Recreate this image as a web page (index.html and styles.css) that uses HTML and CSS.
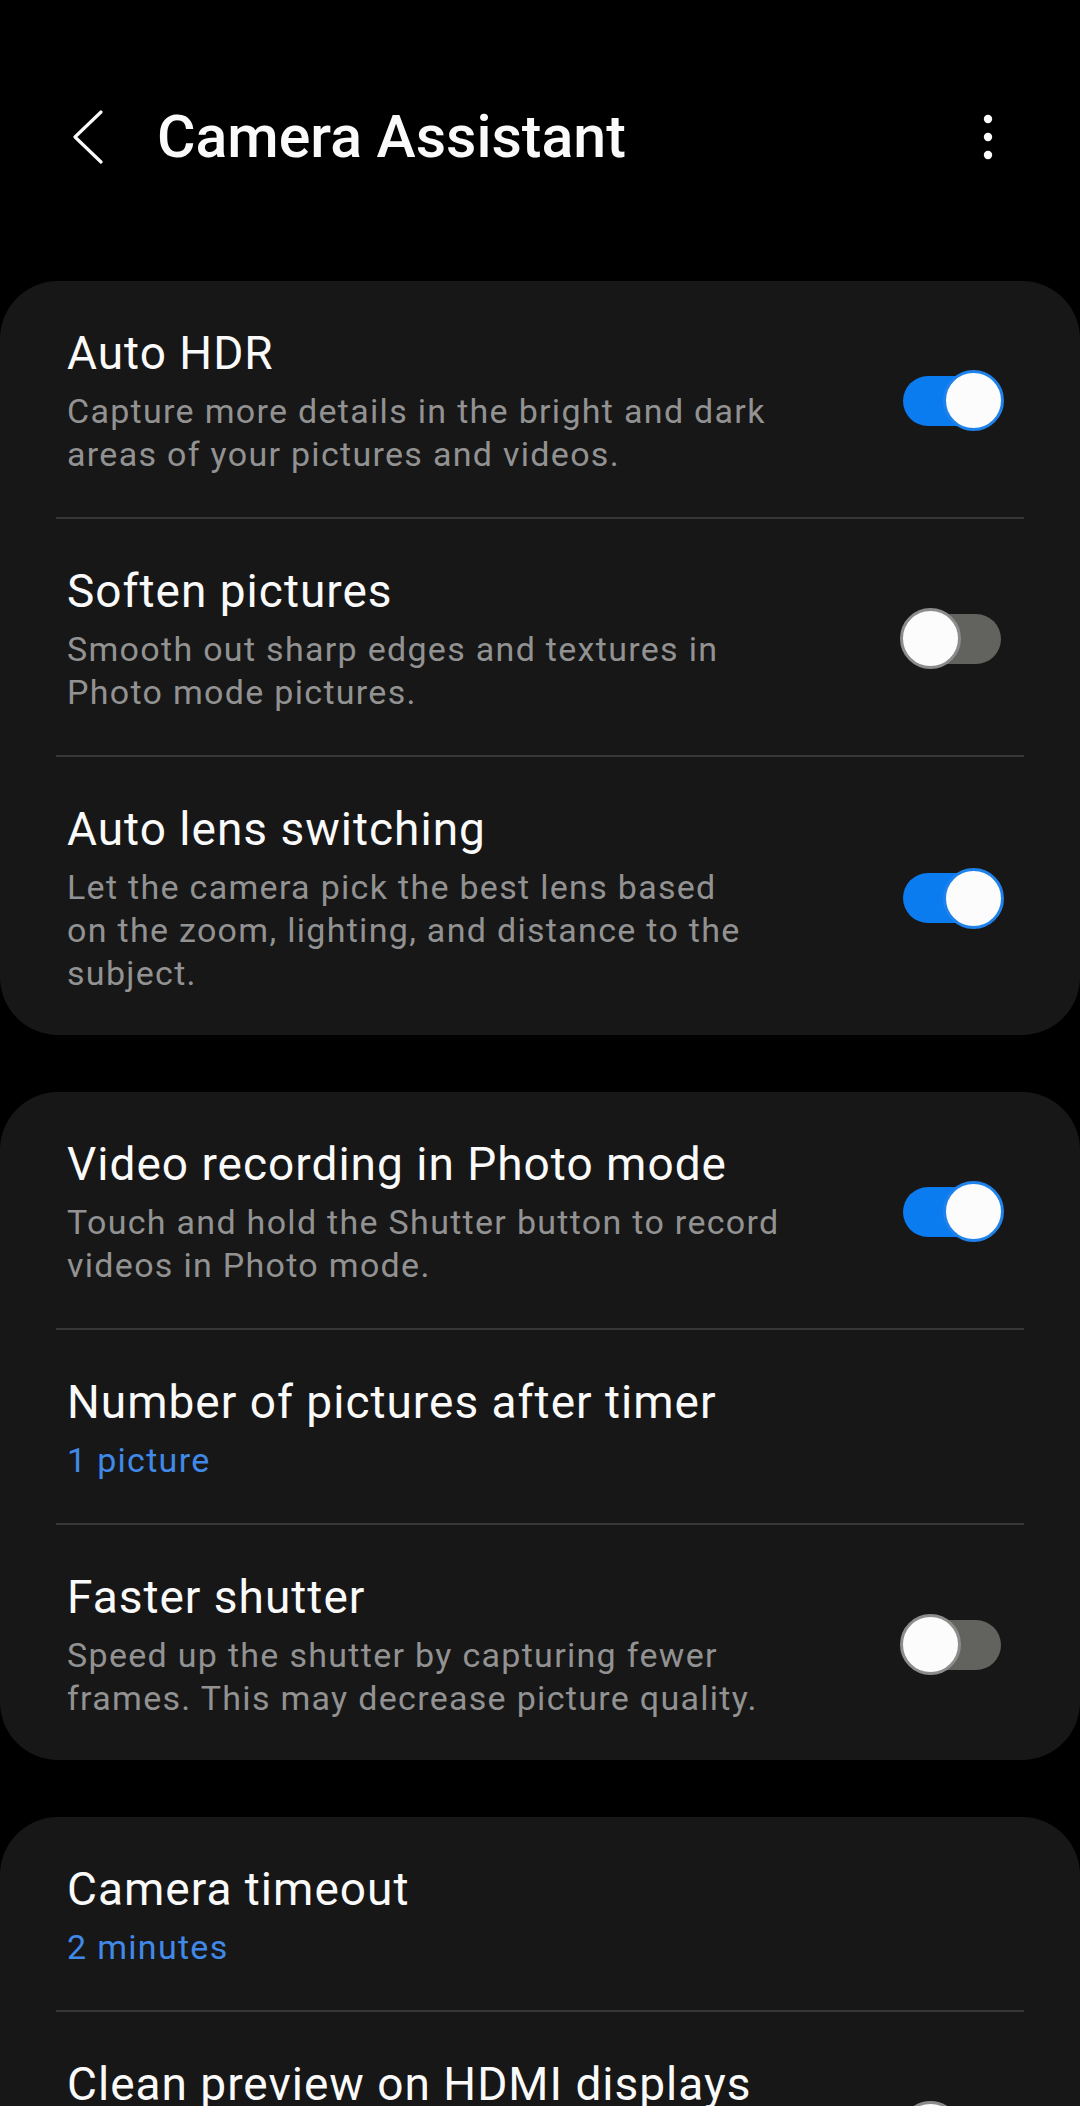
FILE: index.html
```html
<!DOCTYPE html>
<html>

<head>

<title>Camera Assistant</title>

<link rel="stylesheet" href="styles.css">

</head>

<body>

<div id='corpo'>

<div id='cabecalho'>
  <svg class='voltar' width="32" height="54" viewBox="0 0 32 54">
    <path d="M29 2 L3 27 L29 52" fill="none" stroke="#fafafa" stroke-width="3.2" stroke-linecap="round" stroke-linejoin="round"/>
  </svg>
  <h1 id='titulo'>Camera Assistant</h1>
  <svg class='menu' width="12" height="48" viewBox="0 0 12 48">
    <circle cx="6" cy="6" r="4.2" fill="#fafafa"/>
    <circle cx="6" cy="24" r="4.2" fill="#fafafa"/>
    <circle cx="6" cy="42" r="4.2" fill="#fafafa"/>
  </svg>
</div>

<!-- bloco 1 -->
<div class='cartao'>
  <div class='linha'>
    <div class='texto'>
      <div class='nome'>Auto HDR</div>
      <div class='desc'>Capture more details in the bright and dark<br>areas of your pictures and videos.</div>
    </div>
    <div class='chave ligada'><span class='bolinha'></span></div>
  </div>
  <div class='divisor'></div>
  <div class='linha'>
    <div class='texto'>
      <div class='nome'>Soften pictures</div>
      <div class='desc'>Smooth out sharp edges and textures in<br>Photo mode pictures.</div>
    </div>
    <div class='chave'><span class='bolinha'></span></div>
  </div>
  <div class='divisor'></div>
  <div class='linha'>
    <div class='texto'>
      <div class='nome'>Auto lens switching</div>
      <div class='desc'>Let the camera pick the best lens based<br>on the zoom, lighting, and distance to the<br>subject.</div>
    </div>
    <div class='chave ligada'><span class='bolinha'></span></div>
  </div>
</div>

<!-- bloco 2 -->
<div class='cartao'>
  <div class='linha'>
    <div class='texto'>
      <div class='nome'>Video recording in Photo mode</div>
      <div class='desc'>Touch and hold the Shutter button to record<br>videos in Photo mode.</div>
    </div>
    <div class='chave ligada'><span class='bolinha'></span></div>
  </div>
  <div class='divisor'></div>
  <div class='linha'>
    <div class='texto'>
      <div class='nome'>Number of pictures after timer</div>
      <div class='valor'>1 picture</div>
    </div>
  </div>
  <div class='divisor'></div>
  <div class='linha'>
    <div class='texto'>
      <div class='nome'>Faster shutter</div>
      <div class='desc'>Speed up the shutter by capturing fewer<br>frames. This may decrease picture quality.</div>
    </div>
    <div class='chave'><span class='bolinha'></span></div>
  </div>
</div>

<!-- bloco 3 -->
<div class='cartao'>
  <div class='linha'>
    <div class='texto'>
      <div class='nome'>Camera timeout</div>
      <div class='valor'>2 minutes</div>
    </div>
  </div>
  <div class='divisor'></div>
  <div class='linha'>
    <div class='texto'>
      <div class='nome'>Clean preview on HDMI displays</div>
      <div class='desc'>Show only the preview, without buttons or<br>menus, on connected HDMI displays.</div>
    </div>
    <div class='chave'><span class='bolinha'></span></div>
  </div>
</div>

</div>

</body>

</html>
```

FILE: styles.css
```css
*{ font-family: Roboto, "Liberation Sans", sans-serif; box-sizing: border-box; }
html, body{ margin: 0; padding: 0; background-color: #000; height: 2106px; overflow: hidden; }

#cabecalho{ display: flex; align-items: center; padding: 102px 86px 0px 72px; height: 172px; margin-bottom: 109px; }
.voltar{ flex-shrink: 0; }
#titulo{ flex: 1; margin: 0px 0px 0px 53px; font-size: 59px; line-height: 70px; font-weight: 500; color: #fafafa; }
.menu{ flex-shrink: 0; }

.cartao{ background-color: #171717; border-radius: 58px; margin-bottom: 57px; }

.linha{ display: flex; align-items: center; padding: 44px 79px 41px 67px; }
.linha:last-child{ padding-bottom: 40px; }
.texto{ flex: 1; white-space: nowrap; }
.nome{ font-size: 46px; line-height: 56px; letter-spacing: 1px; color: #fafafa; }
.desc, .valor{ font-size: 34px; line-height: 43px; letter-spacing: 1.3px; margin-top: 9px; color: #929292; }
.valor{ color: #4189e8; }

.divisor{ height: 2px; margin: 0px 56px; background-color: #363636; }

.chave{ display: flex; align-items: center; width: 98px; height: 50px; border-radius: 25px; background-color: #62635e; flex-shrink: 0; }
.chave .bolinha{ width: 61px; height: 61px; border-radius: 50%; background-color: #fcfcfc; border: 3px solid #8c8c8c; margin-left: -3px; flex-shrink: 0; }
.ligada{ justify-content: flex-end; background-color: #0b7bf0; }
.ligada .bolinha{ border-color: #1f82ea; margin-left: 0px; margin-right: -3px; }
```
